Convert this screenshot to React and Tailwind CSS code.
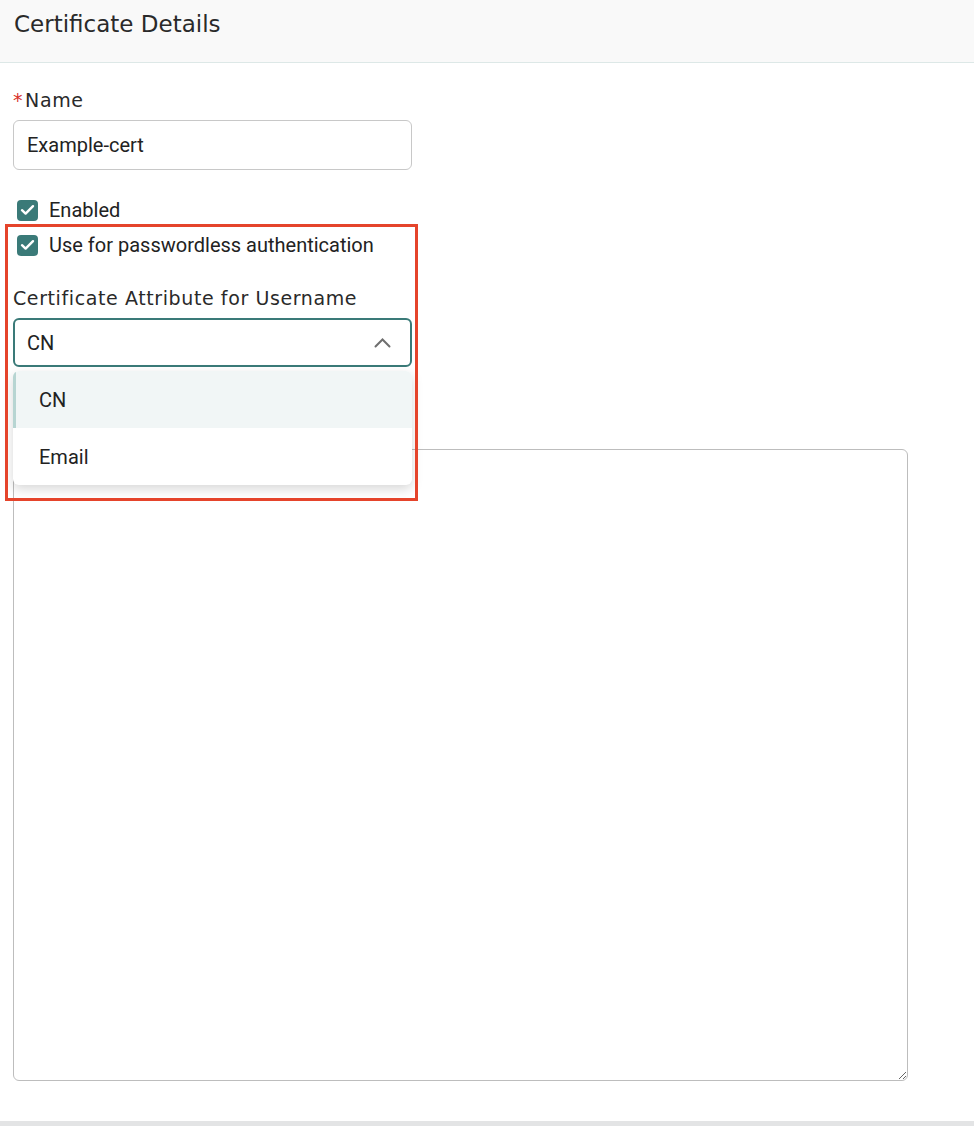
import React from 'react';

const heading = { fontFamily: '"DejaVu Sans", "Open Sans", sans-serif' };
const body = { fontFamily: 'Roboto, "Noto Sans", sans-serif' };

function CheckRow({ label }) {
  return (
    <label className="flex h-[24px] items-center gap-[11px] pl-[4px]">
      <span className="flex h-[21px] w-[21px] items-center justify-center rounded-[4px] bg-[#3a7a78]">
        <svg width="15" height="12" viewBox="0 0 15 12" fill="none">
          <path d="M2 6.2 5.6 9.6 13 2.2" stroke="#fff" strokeWidth="2.4" strokeLinecap="round" strokeLinejoin="round" />
        </svg>
      </span>
      <span className="text-[20px] text-[#222]" style={body}>{label}</span>
    </label>
  );
}

export default function App() {
  return (
    <div className="relative h-[1126px] overflow-hidden bg-[#e3e4e5]">
      <div className="bg-white pb-[40px]">
        {/* panel header */}
        <div className="h-[63px] border-b border-[#dde8e7] bg-[#f9f9f9] px-[14px] pt-[10px]">
          <h2 className="text-[23px] leading-[28px] font-normal text-[#2a2a2a]" style={heading}>
            Certificate Details
          </h2>
        </div>

        <div className="px-[13px]">
          <div className="mt-[25px] flex h-[24px] items-center text-[19px] tracking-[0.6px] text-[#2a2a2a]" style={heading}>
            <span className="mr-[2px] text-[#d8322a]">*</span>Name
          </div>
          <input
            readOnly
            value="Example-cert"
            className="mt-[8px] h-[50px] w-[399px] rounded-[6px] border border-[#c8c8c8] px-[13px] text-[20px] text-[#222] outline-none"
            style={body}
          />

          <div className="mt-[28px] flex flex-col gap-[11px]">
            <CheckRow label="Enabled" />
            <CheckRow label="Use for passwordless authentication" />
          </div>

          <div className="mt-[29px] flex h-[24px] items-center text-[19px] tracking-[0.6px] text-[#2a2a2a]" style={heading}>
            Certificate Attribute for Username
          </div>

          {/* open select */}
          <div className="relative mt-[8px] w-[399px]">
            <div className="flex h-[49px] items-center justify-between rounded-[6px] border-2 border-[#3a7a78] pr-[19px] pl-[12px]">
              <span className="text-[20px] text-[#222]" style={body}>CN</span>
              <svg width="17" height="10" viewBox="0 0 17 10" fill="none">
                <path d="M1.5 8.5 8.5 1.5l7 7" stroke="#6f6f6f" strokeWidth="2" strokeLinecap="round" />
              </svg>
            </div>
            <ul
              className="absolute top-[53px] left-0 z-10 w-[399px] overflow-hidden rounded-[6px] bg-white shadow-[0_4px_12px_rgba(0,0,0,0.16)]"
              style={body}
            >
              <li className="flex h-[57px] items-center border-l-[3px] border-[#b7d5d2] bg-[#f1f6f6] pl-[23px] text-[20px] text-[#222]">
                CN
              </li>
              <li className="flex h-[57px] items-center pl-[26px] text-[20px] text-[#222]">Email</li>
            </ul>
          </div>

          <textarea
            readOnly
            className="mt-[82px] block h-[632px] w-[895px] rounded-[6px] border border-[#bdbdbd] outline-none"
          />
        </div>
      </div>

      {/* highlight frame */}
      <div className="pointer-events-none absolute top-[224px] left-[5px] z-20 h-[277px] w-[413px] border-[3px] border-[#e5442b]" />
    </div>
  );
}
